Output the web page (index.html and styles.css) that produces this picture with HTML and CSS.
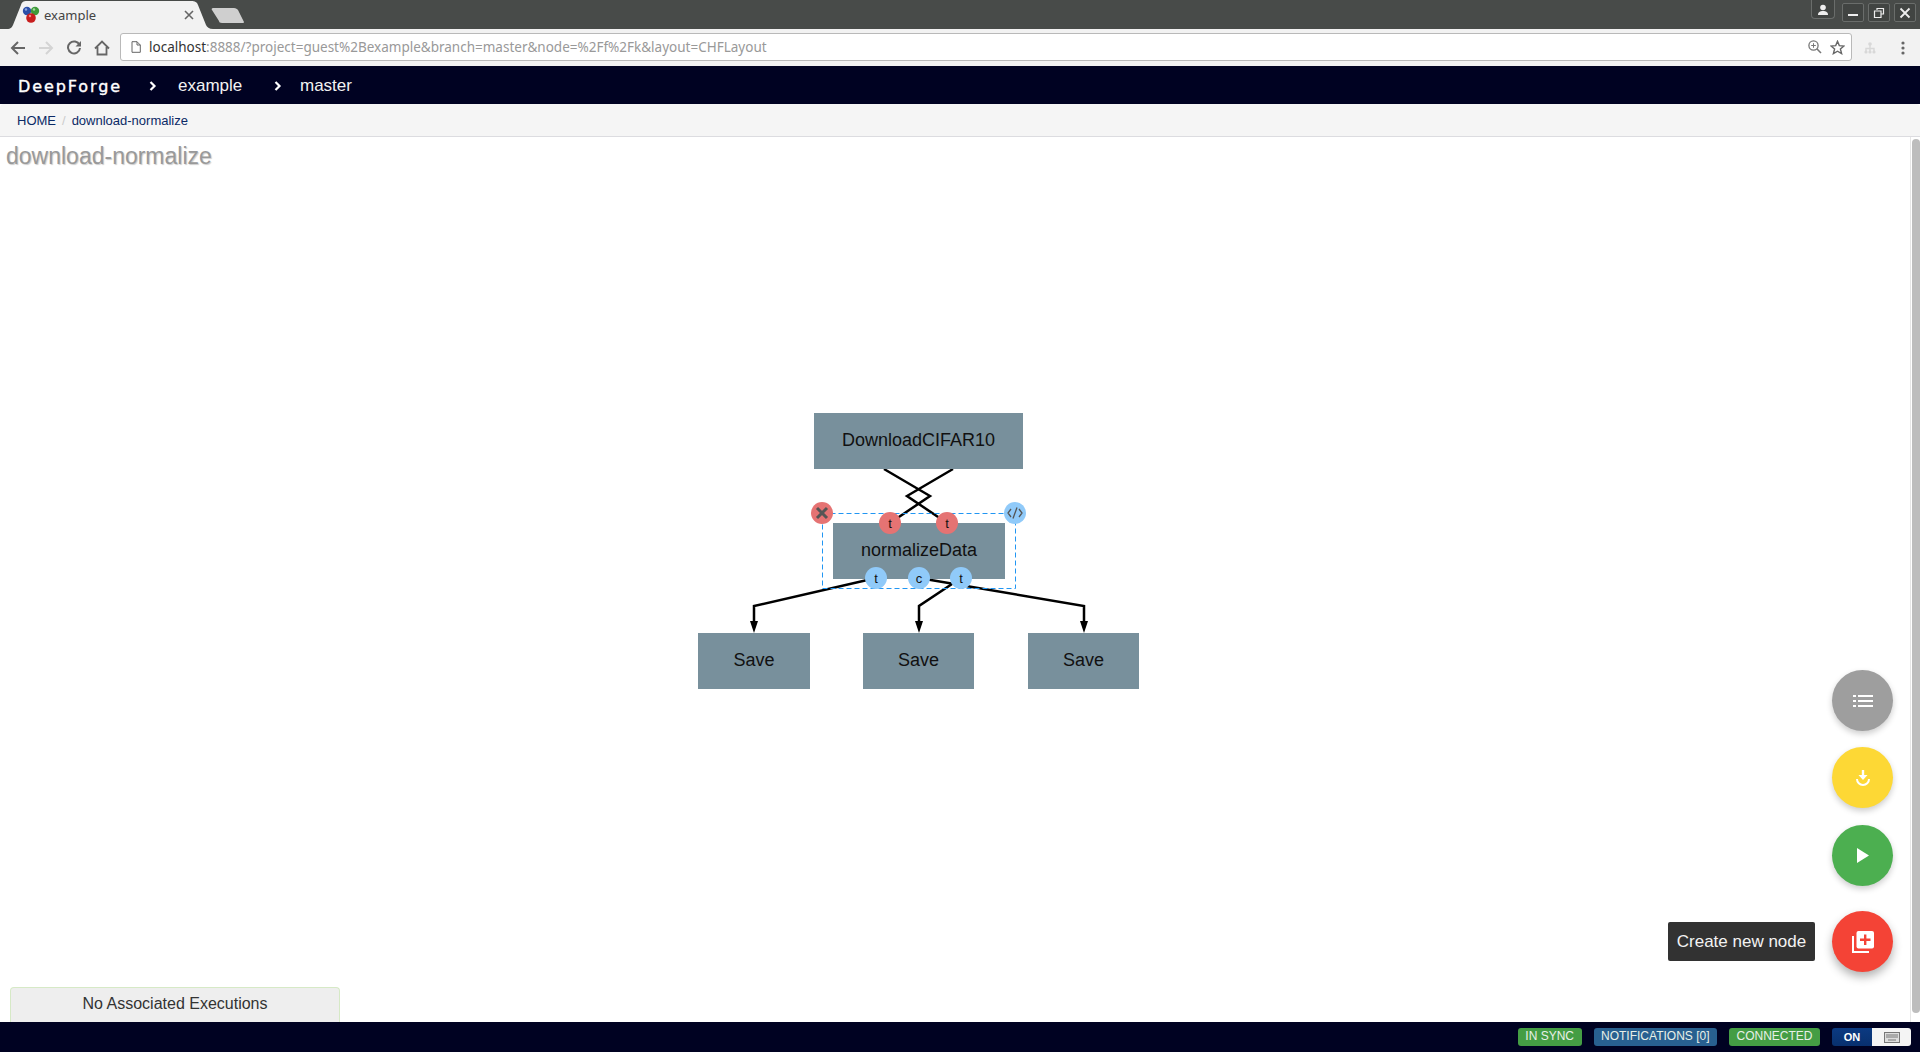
FILE: index.html
```html
<!DOCTYPE html>
<html lang="en">
<head>
    <meta charset="UTF-8">
    <title>example</title>
    <link rel="stylesheet" href="styles.css">
</head>
<body>
    <!-- browser tab strip -->
    <div class="tabstrip">
        <svg class="tabshape" width="250" height="29" viewBox="0 0 250 29">
            <path d="M6 29 C10 29 11 27 12 25 L20 5 C21 2 22 1 26 1 L190 1 C194 1 196 2 197 5 L205 25 C206 27 208 29 212 29 Z" fill="#f2f2f2"/>
            <path d="M212 8 L233 8 C235 8 236 9 237 10 L243 22 C243 23 242 23 241 23 L221 23 C219 23 218 22 218 21 L211 10 C210 9 211 8 212 8 Z" fill="#cfcfcf"/>
        </svg>
        <svg class="favicon" width="18" height="18" viewBox="0 0 18 18">
            <circle cx="5" cy="5" r="4.2" fill="#2b4fa8"/>
            <circle cx="13" cy="5" r="4.2" fill="#3f9a3a"/>
            <circle cx="9" cy="12" r="4.8" fill="#c81e1e"/>
            <circle cx="4" cy="3.5" r="1.2" fill="#8fa6e0"/>
            <circle cx="12" cy="3.5" r="1.2" fill="#a4dca0"/>
            <circle cx="8" cy="10" r="1.2" fill="#ee8a8a"/>
        </svg>
        <span class="tabtitle">example</span>
        <svg class="tabclose" width="10" height="10" viewBox="0 0 10 10"><path d="M1 1 L9 9 M9 1 L1 9" stroke="#666" stroke-width="1.6"/></svg>
        <div class="winbtns">
            <div class="winbtn userbtn">
                <svg width="12" height="12" viewBox="0 0 12 12"><circle cx="6" cy="3.5" r="2.8" fill="#eee"/><path d="M1 11 C1 8 3 7 6 7 C9 7 11 8 11 11 Z" fill="#eee"/></svg>
            </div>
            <div class="winbtn">
                <svg width="12" height="12" viewBox="0 0 12 12"><rect x="1" y="7" width="10" height="2" fill="#eee"/></svg>
            </div>
            <div class="winbtn">
                <svg width="12" height="12" viewBox="0 0 12 12"><path d="M4 3 V1.5 H10.5 V7 H8 M1.5 4 H8 V10.5 H1.5 Z" fill="none" stroke="#eee" stroke-width="1.2"/></svg>
            </div>
            <div class="winbtn">
                <svg width="12" height="12" viewBox="0 0 12 12"><path d="M1.5 1.5 L10.5 10.5 M10.5 1.5 L1.5 10.5" stroke="#eee" stroke-width="1.8"/></svg>
            </div>
        </div>
    </div>

    <!-- address bar -->
    <div class="toolbar">
        <svg class="navicon" width="16" height="16" viewBox="0 0 16 16"><path d="M15 8 H2.5 M8 2 L2 8 L8 14" fill="none" stroke="#666" stroke-width="2"/></svg>
        <svg class="navicon" width="16" height="16" viewBox="0 0 16 16"><path d="M1 8 H13.5 M8 2 L14 8 L8 14" fill="none" stroke="#d4d4d4" stroke-width="2"/></svg>
        <svg class="navicon" width="16" height="16" viewBox="0 0 16 16"><path d="M13.5 5 A6 6 0 1 0 14 8" fill="none" stroke="#666" stroke-width="2"/><path d="M15 1 V6.5 H9.5 Z" fill="#666"/></svg>
        <svg class="navicon" width="16" height="16" viewBox="0 0 16 16"><path d="M1 8.5 L8 1.5 L15 8.5 M3.5 7 V14.5 H12.5 V7" fill="none" stroke="#666" stroke-width="1.8"/></svg>
        <div class="omnibox">
            <svg width="10" height="12" viewBox="0 0 10 12"><path d="M1 .7 H6 L9.3 4 V11.3 H1 Z M6 .7 V4 H9.3" fill="none" stroke="#666"/></svg>
            <span class="url"><span class="host">localhost</span>:8888/?project=guest%2Bexample&amp;branch=master&amp;node=%2Ff%2Fk&amp;layout=CHFLayout</span>
            <span class="omniright">
                <svg width="14" height="14" viewBox="0 0 14 14"><circle cx="5.5" cy="5.5" r="4.6" fill="none" stroke="#777" stroke-width="1.3"/><path d="M8.8 8.8 L13 13" stroke="#777" stroke-width="1.6"/><path d="M3.2 5.5 H7.8 M5.5 3.2 V7.8" stroke="#777"/></svg>
                <svg width="15" height="15" viewBox="0 0 15 15"><path d="M7.5 1.3 L9.3 5.6 L14 6 L10.4 9 L11.6 13.6 L7.5 11.2 L3.4 13.6 L4.6 9 L1 6 L5.7 5.6 Z" fill="none" stroke="#666" stroke-width="1.4"/></svg>
            </span>
        </div>
        <svg class="exticon" width="12" height="12" viewBox="0 0 12 12"><circle cx="6" cy="2" r="1.8" fill="#d8d8d8"/><path d="M6 3 V9 M2 9 V6.5 H10 V9" fill="none" stroke="#d8d8d8" stroke-width="1.4"/><circle cx="2" cy="10" r="1.6" fill="#d8d8d8"/><circle cx="6" cy="10" r="1.6" fill="#d8d8d8"/><circle cx="10" cy="10" r="1.6" fill="#d8d8d8"/></svg>
        <svg class="menuicon" width="4" height="14" viewBox="0 0 4 14"><circle cx="2" cy="2" r="1.6" fill="#666"/><circle cx="2" cy="7" r="1.6" fill="#666"/><circle cx="2" cy="12" r="1.6" fill="#666"/></svg>
    </div>

    <!-- app header -->
    <div class="navbar">
        <span class="logo">DeepForge</span>
        <span class="navsep"><svg width="8" height="10" viewBox="0 0 8 10"><path d="M1.5 1 L5.5 5 L1.5 9" fill="none" stroke="#fff" stroke-width="2.2"/></svg></span>
        <span class="navitem project">example</span>
        <span class="navsep"><svg width="8" height="10" viewBox="0 0 8 10"><path d="M1.5 1 L5.5 5 L1.5 9" fill="none" stroke="#fff" stroke-width="2.2"/></svg></span>
        <span class="navitem">master</span>
    </div>

    <div class="breadcrumb">
        <a class="crumb">HOME</a>
        <span class="slash">/</span>
        <a class="crumb">download-normalize</a>
    </div>

    <div class="canvas">
        <div class="canvasmain">
            <h2 class="title">download-normalize</h2>

            <svg class="graph" width="460" height="300" viewBox="690 400 460 300">
                <path class="wire" d="M884 469 L930 496 L890 523"/>
                <path class="wire" d="M953 469 L907 496 L947 523"/>
                <path class="wire" d="M876 578 L754 606 L754 624"/>
                <path class="wire" d="M919 578 L1084 606 L1084 624"/>
                <path class="wire" d="M961 578 L919 606 L919 624"/>
                <path d="M750 621 L758 621 L754 633 Z M915 621 L923 621 L919 633 Z M1080 621 L1088 621 L1084 633 Z"/>

                <rect class="node" x="814" y="413" width="209" height="56"/>
                <text class="nodelabel" x="918.500" y="446">DownloadCIFAR10</text>

                <rect class="selection" x="822.500" y="513.500" width="193" height="75"/>

                <rect class="node" x="833" y="523" width="172" height="56"/>
                <text class="nodelabel" x="919" y="556">normalizeData</text>

                <rect class="node" x="698" y="633" width="112" height="56"/>
                <text class="nodelabel" x="754" y="666">Save</text>
                <rect class="node" x="863" y="633" width="111" height="56"/>
                <text class="nodelabel" x="918.500" y="666">Save</text>
                <rect class="node" x="1028" y="633" width="111" height="56"/>
                <text class="nodelabel" x="1083.500" y="666">Save</text>

                <circle class="portin" cx="890" cy="523" r="11"/>
                <text class="portlabel" x="890" y="528">t</text>
                <circle class="portin" cx="947" cy="523" r="11"/>
                <text class="portlabel" x="947" y="528">t</text>
                <circle class="portout" cx="876" cy="578" r="11"/>
                <text class="portlabel" x="876" y="583">t</text>
                <circle class="portout" cx="919" cy="578" r="11"/>
                <text class="portlabel" x="919" y="583">c</text>
                <circle class="portout" cx="961" cy="578" r="11"/>
                <text class="portlabel" x="961" y="583">t</text>

                <circle class="portin" cx="822" cy="513" r="11"/>
                <path d="M817 508 L827 518 M827 508 L817 518" stroke="#555" stroke-width="3"/>
                <circle class="portout" cx="1015" cy="513" r="11"/>
                <path d="M1011 509 L1008 513 L1011 517 M1019 509 L1022 513 L1019 517 M1017 507.500 L1013 518.500" fill="none" stroke="#555" stroke-width="1.300"/>
            </svg>

            <div class="fabs">
                <div class="fab fabgray">
                    <svg width="20" height="12" viewBox="0 0 20 12"><path d="M5 1 H20 M5 6 H20 M5 11 H20" stroke="#fff" stroke-width="2"/><path d="M0 1 H3 M0 6 H3 M0 11 H3" stroke="#fff" stroke-width="2"/></svg>
                </div>
                <div class="fab fabyellow">
                    <svg width="14" height="16" viewBox="0 0 14 16"><path d="M7 0 V7" stroke="#fff" stroke-width="2.400"/><path d="M2.500 5 H11.500 L7 10 Z" fill="#fff"/><path d="M1 9 A6 6 0 0 0 13 9" fill="none" stroke="#fff" stroke-width="2"/></svg>
                </div>
                <div class="fab fabgreen">
                    <svg width="12" height="15" viewBox="0 0 12 15"><path d="M0 0 L12 7.500 L0 15 Z" fill="#fff"/></svg>
                </div>
                <div class="fabrow">
                    <div class="tooltip">Create new node</div>
                    <div class="fab fabred">
                        <svg width="22" height="22" viewBox="0 0 22 22"><path d="M1 5 V21 H17" fill="none" stroke="#fff" stroke-width="2"/><rect x="4.500" y="0" width="17.500" height="17.500" rx="2" fill="#fff"/><path d="M13.200 3.500 V14 M8 8.800 H18.500" stroke="#f44336" stroke-width="2.400"/></svg>
                    </div>
                </div>
            </div>

            <div class="execpanel">No Associated Executions</div>
        </div>
        <div class="scrollbar"><div class="thumb"></div></div>
    </div>

    <div class="footer">
        <span class="label green">IN SYNC</span>
        <span class="label blue">NOTIFICATIONS [0]</span>
        <span class="label green">CONNECTED</span>
        <div class="toggle">
            <span class="toggleon">ON</span>
            <span class="toggleoff">
                <svg width="16" height="11" viewBox="0 0 16 11"><rect x=".5" y=".5" width="15" height="10" fill="#ddd" stroke="#777"/><path d="M2 3 H14 M2 5 H14 M4 8 H12" stroke="#777"/></svg>
            </span>
        </div>
    </div>
</body>
</html>
```

FILE: styles.css
```css
* { box-sizing: border-box; }
html, body { margin: 0; height: 100%; }
body { display: flex; flex-direction: column; height: 1052px; overflow: hidden; font-family: "Liberation Sans", Arial, sans-serif; background: #fff; }

.tabstrip { position: relative; height: 29px; flex: none; background: #484b49; }
.tabshape { position: absolute; left: 1px; top: 0; }
.favicon { position: absolute; left: 22px; top: 6px; }
.tabtitle { position: absolute; left: 44px; top: 6px; font: 13px "Noto Sans", sans-serif; color: #444; }
.tabclose { position: absolute; left: 184px; top: 10px; }
.winbtns { position: absolute; right: 4px; top: 0; display: flex; gap: 4px; }
.winbtn { width: 22px; height: 19px; margin-top: 3px; display: flex; align-items: center; justify-content: center; border: 1px solid #6a6d6b; border-radius: 2px; background: #414442; }
.userbtn { width: 24px; height: 19px; margin-top: 0; margin-right: 3px; padding-top: 2px; border-top: none; border-radius: 0 0 4px 4px; }

.toolbar { height: 37px; flex: none; display: flex; align-items: center; background: #f2f2f2; padding-left: 10px; }
.navicon { margin-right: 12px; flex: none; }
.omnibox { width: 1732px; height: 28px; margin: 0 0 1px -2px; display: flex; align-items: center; background: #fff; border: 1px solid #b9b9b9; border-radius: 3px; padding: 0 6px 0 28px; position: relative; }
.omnibox > svg { position: absolute; left: 10px; top: 7px; }
.url { font: 13.5px "Noto Sans", sans-serif; color: #999; white-space: nowrap; padding-bottom: 1px; }
.host { color: #333; }
.omniright { margin-left: auto; display: flex; align-items: center; gap: 8px; }
.exticon { margin-left: 12px; }
.menuicon { margin-left: 25px; }

.navbar { height: 38px; flex: none; display: flex; align-items: center; background: #000222; color: #fff; padding: 2px 0 0 18px; }
.logo { width: 131px; font: 16px "DejaVu Sans", sans-serif; letter-spacing: 1.9px; -webkit-text-stroke: .4px #fff; }
.navsep { width: 26px; display: flex; align-items: center; }
.navitem { font-size: 17px; width: 96px; color: #f2f2f2; }
.project { margin-left: 3px; }

.breadcrumb { height: 33px; flex: none; display: flex; align-items: center; gap: 6px; background: #f5f5f5; border-bottom: 1px solid #dcdce0; border-radius: 4px 4px 0 0; padding-left: 17px; font-size: 13px; }
.crumb { color: #0b2a66; }
.slash { color: #ccc; }

.canvas { flex: 1; display: flex; min-height: 0; }
.canvasmain { flex: 1; position: relative; }
.title { margin: 0; padding: 5px 0 0 6px; font-size: 23px; font-weight: normal; line-height: 28px; color: #999; text-shadow: 1px 1px 1px #ccc; }

/* free canvas, nodes sit at their own coordinates */
.graph { position: absolute; left: 690px; top: 263px; }
.wire { fill: none; stroke: #000; stroke-width: 2.500; }
.node { fill: #78909c; }
.nodelabel { font-size: 18px; text-anchor: middle; fill: #111; }
.selection { fill: none; stroke: #2196f3; stroke-width: 1; stroke-dasharray: 5 3; }
.portin { fill: #e57373; }
.portout { fill: #90caf9; }
.portlabel { font-size: 13px; text-anchor: middle; fill: #111; }

.fabs { position: absolute; left: 1668px; top: 533px; width: 225px; display: flex; flex-direction: column; align-items: flex-end; gap: 16px; }
.fab { width: 61px; height: 61px; flex: none; border-radius: 50%; display: flex; align-items: center; justify-content: center; box-shadow: 0 3px 6px rgba(0,0,0,.2); }
.fabgray { background: #9e9e9e; }
.fabyellow { background: #fdd835; }
.fabgreen { background: #4caf50; margin-top: 1px; }
.fabred { background: #f44336; box-shadow: 0 5px 10px rgba(0,0,0,.3); }
.fabrow { display: flex; align-items: center; justify-content: space-between; width: 225px; margin-top: 9px; }
.tooltip { width: 147px; height: 39px; line-height: 39px; text-align: center; background: #323232; color: #f2f2f2; font-size: 17px; border-radius: 2px; }

.execpanel { position: absolute; left: 10px; bottom: 0; width: 330px; height: 35px; line-height: 31px; text-align: center; font-size: 16px; color: #333; background: #eee; border: 1px solid #d6e9c6; border-bottom: none; border-radius: 4px 4px 0 0; }

.scrollbar { width: 10px; flex: none; background: #fff; border-left: 1px solid #e6e6e6; padding: 2px 0 0 1px; }
.thumb { height: 874px; background: #bdbdbd; border-radius: 4px; }

.footer { height: 30px; flex: none; display: flex; align-items: center; justify-content: flex-end; gap: 12px; background: #000222; padding-right: 9px; }
.label { height: 18px; line-height: 17px; padding: 0 7.500px; font-size: 12px; color: #e8f0e8; border-radius: 3px; }
.green { background: #449d44; }
.blue { background: #286090; }
.toggle { width: 79px; height: 18px; display: flex; border-radius: 3px; overflow: hidden; }
.toggleon { width: 40px; text-align: center; line-height: 18px; font-size: 11px; font-weight: bold; color: #fff; background: linear-gradient(#0b3a82, #08306e); }
.toggleoff { flex: 1; display: flex; align-items: center; justify-content: center; background: #f4f4f4; }
```
